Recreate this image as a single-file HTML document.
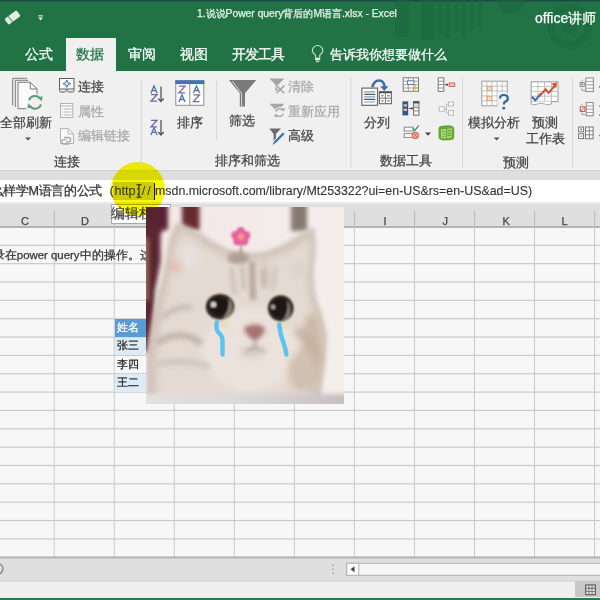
<!DOCTYPE html>
<html><head><meta charset="utf-8">
<style>
*{margin:0;padding:0;box-sizing:border-box}
html,body{width:600px;height:600px;overflow:hidden;background:#f7f7f7;font-family:"Liberation Sans",sans-serif}
.a{position:absolute;white-space:nowrap;line-height:1;-webkit-text-stroke:0.25px currentColor}
svg{position:absolute;left:0;top:0}
</style></head><body>

<div class="a" style="left:0;top:0;width:600px;height:70.5px;background:#217346"></div>

<div class="a" style="left:66px;top:37.5px;width:50px;height:34px;background:#f0f0f0"></div>
<div class="a" style="left:0;top:70.5px;width:600px;height:100.5px;background:#f0f0f0"></div>
<div class="a" style="left:0;top:170px;width:600px;height:1px;background:#d2d2d2"></div>
<div class="a" style="left:0;top:171px;width:600px;height:9px;background:#dedede"></div>
<div class="a" style="left:0;top:180px;width:600px;height:22px;background:#fff"></div>
<div class="a" style="left:0;top:202px;width:600px;height:2px;background:#ebebeb"></div>
<div class="a" style="left:0;top:204px;width:600px;height:22px;background:#dfdfdf"></div>
<div class="a" style="left:0;top:226px;width:600px;height:1.5px;background:#b4b4b4"></div>
<div class="a" style="left:0;top:557px;width:600px;height:24px;background:#dfdfdf"></div>
<div class="a" style="left:0;top:581px;width:600px;height:16px;background:#efefef"></div>
<div class="a" style="left:0;top:597px;width:600px;height:1px;background:#e6efe9"></div><div class="a" style="left:0;top:598px;width:600px;height:2px;background:#2a7a4e"></div>
<svg width="600" height="72" viewBox="0 0 600 72">
<rect x="0" y="0" width="600" height="1.5" fill="#1c4a46"/>
<g fill="#1d673f" opacity="0.55">
<rect x="395" y="0" width="14" height="37"/>
<rect x="421" y="0" width="14" height="40"/>
<rect x="438" y="0" width="4" height="36"/>
<rect x="445" y="0" width="5" height="38"/>
<rect x="455" y="0" width="3" height="32"/>
<rect x="461" y="0" width="5" height="36"/>
<rect x="470" y="0" width="4" height="30"/>
<rect x="478" y="0" width="4" height="28"/>
<circle cx="511" cy="0" r="14"/>
</g>
<g fill="none" stroke="#1d673f" opacity="0.6">
<circle cx="569.7" cy="26" r="19" stroke-width="7"/>
</g>
<circle cx="569.7" cy="26" r="8" fill="#1d673f" opacity="0.6"/>
<!-- eraser -->
<g transform="translate(12.5 17.5) rotate(-37)">
<rect x="-7.5" y="-3.6" width="15" height="7.2" rx="1.3" fill="#dcefe2"/>
<rect x="-3.2" y="-3.6" width="0.9" height="7.2" fill="#4a7a5a"/>
</g>
<!-- qat dropdown -->
<rect x="38.3" y="15.3" width="4.6" height="1.1" fill="#e0f0e4"/>
<path d="M38.3 17.6H42.9L40.6 20.4Z" fill="#e0f0e4"/>
<!-- lightbulb -->
<path d="M315.5 57.5V55.2Q312.3 52.8 312.3 50.8A5.3 5.3 0 0 1 322.9 50.8Q322.9 52.8 319.7 55.2V57.5" fill="none" stroke="#c9e6d2" stroke-width="1.1"/>
<rect x="315" y="57.6" width="5.2" height="2.6" fill="#d9efe0"/>
<rect x="316" y="60.6" width="3.2" height="1.6" fill="#b9dcc4"/>
</svg>
<svg width="600" height="600" viewBox="0 0 600 600">
<rect x="0" y="244.70" width="600" height="1.2" fill="#cbcbcb"/>
<rect x="0" y="263.05" width="600" height="1.2" fill="#cbcbcb"/>
<rect x="0" y="281.40" width="600" height="1.2" fill="#cbcbcb"/>
<rect x="0" y="299.75" width="600" height="1.2" fill="#cbcbcb"/>
<rect x="0" y="318.10" width="600" height="1.2" fill="#cbcbcb"/>
<rect x="0" y="336.45" width="600" height="1.2" fill="#cbcbcb"/>
<rect x="0" y="354.80" width="600" height="1.2" fill="#cbcbcb"/>
<rect x="0" y="373.15" width="600" height="1.2" fill="#cbcbcb"/>
<rect x="0" y="391.50" width="600" height="1.2" fill="#cbcbcb"/>
<rect x="0" y="409.85" width="600" height="1.2" fill="#cbcbcb"/>
<rect x="0" y="428.20" width="600" height="1.2" fill="#cbcbcb"/>
<rect x="0" y="446.55" width="600" height="1.2" fill="#cbcbcb"/>
<rect x="0" y="464.90" width="600" height="1.2" fill="#cbcbcb"/>
<rect x="0" y="483.25" width="600" height="1.2" fill="#cbcbcb"/>
<rect x="0" y="501.60" width="600" height="1.2" fill="#cbcbcb"/>
<rect x="0" y="519.95" width="600" height="1.2" fill="#cbcbcb"/>
<rect x="0" y="538.30" width="600" height="1.2" fill="#cbcbcb"/>
<rect x="0" y="556.65" width="600" height="1.2" fill="#cbcbcb"/>
<rect x="53.70" y="227" width="1" height="330" fill="#cacaca"/>
<rect x="53.70" y="211" width="1.2" height="15.5" fill="#bdbdbd"/>
<rect x="113.74" y="227" width="1" height="330" fill="#cacaca"/>
<rect x="113.74" y="211" width="1.2" height="15.5" fill="#bdbdbd"/>
<rect x="173.78" y="227" width="1" height="330" fill="#cacaca"/>
<rect x="173.78" y="211" width="1.2" height="15.5" fill="#bdbdbd"/>
<rect x="233.82" y="227" width="1" height="330" fill="#cacaca"/>
<rect x="233.82" y="211" width="1.2" height="15.5" fill="#bdbdbd"/>
<rect x="293.86" y="227" width="1" height="330" fill="#cacaca"/>
<rect x="293.86" y="211" width="1.2" height="15.5" fill="#bdbdbd"/>
<rect x="353.90" y="227" width="1" height="330" fill="#cacaca"/>
<rect x="353.90" y="211" width="1.2" height="15.5" fill="#bdbdbd"/>
<rect x="413.94" y="227" width="1" height="330" fill="#cacaca"/>
<rect x="413.94" y="211" width="1.2" height="15.5" fill="#bdbdbd"/>
<rect x="473.98" y="227" width="1" height="330" fill="#cacaca"/>
<rect x="473.98" y="211" width="1.2" height="15.5" fill="#bdbdbd"/>
<rect x="534.02" y="227" width="1" height="330" fill="#cacaca"/>
<rect x="534.02" y="211" width="1.2" height="15.5" fill="#bdbdbd"/>
<rect x="594.06" y="227" width="1" height="330" fill="#cacaca"/>
<rect x="594.06" y="211" width="1.2" height="15.5" fill="#bdbdbd"/>
<rect x="0" y="556.5" width="600" height="2" fill="#b4b4b4"/><rect x="0" y="580.5" width="600" height="1" fill="#cfcfcf"/>
</svg>
<div class="a" style="left:197px;top:9px;font-size:10.3px;color:#e8f2ec;">1.说说Power query背后的M语言.xlsx - Excel</div>
<div class="a" style="left:535px;top:11px;font-size:14px;color:#ffffff;">office讲师</div>
<div class="a" style="left:25px;top:48px;font-size:13.5px;color:#ffffff;">公式</div>
<div class="a" style="left:76px;top:48px;font-size:13.5px;color:#217346;">数据</div>
<div class="a" style="left:128px;top:48px;font-size:13.5px;color:#ffffff;">审阅</div>
<div class="a" style="left:180px;top:48px;font-size:13.5px;color:#ffffff;">视图</div>
<div class="a" style="left:232px;top:48px;font-size:13.5px;color:#ffffff;letter-spacing:-0.9px">开发工具</div>
<div class="a" style="left:330px;top:48px;font-size:13.1px;color:#ffffff;">告诉我你想要做什么</div>
<div class="a" style="left:0px;top:116px;font-size:13px;color:#444;">全部刷新</div>
<div class="a" style="left:78px;top:80px;font-size:13.3px;color:#444;">连接</div>
<div class="a" style="left:78px;top:105px;font-size:13.3px;color:#a8a8a8;">属性</div>
<div class="a" style="left:78px;top:129px;font-size:13.3px;color:#a8a8a8;">编辑链接</div>
<div class="a" style="left:54px;top:155px;font-size:13.3px;color:#444;">连接</div>
<div class="a" style="left:177px;top:116px;font-size:13.3px;color:#444;">排序</div>
<div class="a" style="left:229px;top:114px;font-size:13.3px;color:#444;">筛选</div>
<div class="a" style="left:288px;top:80px;font-size:13.3px;color:#a8a8a8;">清除</div>
<div class="a" style="left:288px;top:105px;font-size:13.3px;color:#a8a8a8;">重新应用</div>
<div class="a" style="left:288px;top:129px;font-size:13.3px;color:#444;">高级</div>
<div class="a" style="left:215px;top:154px;font-size:13.3px;color:#444;">排序和筛选</div>
<div class="a" style="left:364px;top:116px;font-size:13.3px;color:#444;">分列</div>
<div class="a" style="left:380px;top:154px;font-size:13.3px;color:#444;">数据工具</div>
<div class="a" style="left:468px;top:116px;font-size:13.3px;color:#444;">模拟分析</div>
<div class="a" style="left:532px;top:116px;font-size:13.3px;color:#444;">预测</div>
<div class="a" style="left:526px;top:132px;font-size:13.3px;color:#444;">工作表</div>
<div class="a" style="left:503px;top:156px;font-size:13.3px;color:#444;">预测</div>
<svg width="600" height="600"><path d="M493.6 137.5H499.6L496.6 140.5Z" fill="#555"/></svg>
<div class="a" style="left:598.5px;top:80px;font-size:13.3px;color:#444;">创建组</div>
<div class="a" style="left:598.5px;top:105px;font-size:13.3px;color:#444;">取消组合</div>
<div class="a" style="left:598.5px;top:129px;font-size:13.3px;color:#444;">分类汇总</div>
<div class="a" style="left:113px;top:182px;width:41px;height:18px;background:#d2d2d2;mix-blend-mode:multiply"></div>
<div class="a" style="left:-9.5px;top:185px;font-size:12.6px;color:#333;letter-spacing:-0.32px">么样学M语言的公式（</div>
<div class="a" style="left:114.5px;top:185px;font-size:12.66px;color:#333;-webkit-text-stroke:0">http</div>
<div class="a" style="left:136.5px;top:185px;font-size:12.66px;color:#333;">:</div>
<div class="a" style="left:141.8px;top:185px;font-size:12.66px;color:#333;-webkit-text-stroke:0">/</div>
<div class="a" style="left:147.3px;top:185px;font-size:12.66px;color:#333;-webkit-text-stroke:0">/</div>
<div class="a" style="left:155px;top:185px;font-size:12.4px;color:#333;-webkit-text-stroke:0.1px #333">msdn.microsoft.com/library/Mt253322?ui=en-US&amp;rs=en-US&amp;ad=US)</div>
<div class="a" style="left:153.8px;top:182.5px;width:1.4px;height:17.5px;background:#111"></div>
<svg width="600" height="600"><path d="M136.5 184.8H141.5M139 184.8V197.2M136.5 197.2H141.5" stroke="#222" stroke-width="1.1" fill="none"/></svg>
<div class="a" style="left:110.5px;top:204px;width:60px;height:20px;background:#fff;border:1px solid #a8a8a8"></div>
<div class="a" style="left:110.8px;top:206.8px;font-size:13.6px;color:#444;">编辑栏</div>
<div class="a" style="left:110.8px;top:162px;width:54px;height:54px;border-radius:50%;background:#f8f800;mix-blend-mode:multiply;filter:blur(0.5px)"></div>
<div class="a" style="left:21px;top:216px;font-size:11px;color:#444;">C</div>
<div class="a" style="left:81px;top:216px;font-size:11px;color:#444;">D</div>
<div class="a" style="left:383.5px;top:216px;font-size:11px;color:#444;">I</div>
<div class="a" style="left:442.5px;top:216px;font-size:11px;color:#444;">J</div>
<div class="a" style="left:502.5px;top:216px;font-size:11px;color:#444;">K</div>
<div class="a" style="left:561.5px;top:216px;font-size:11px;color:#444;">L</div>
<div class="a" style="left:115px;top:319px;width:32px;height:17.8px;background:#5b9bd5"></div>
<div class="a" style="left:115px;top:337.6px;width:32px;height:17.6px;background:#ddebf7"></div>
<div class="a" style="left:115px;top:374.3px;width:32px;height:17.6px;background:#ddebf7"></div>
<div class="a" style="left:116.5px;top:322px;font-size:11px;color:#ffffff;">姓名</div>
<div class="a" style="left:116.5px;top:340.3px;font-size:11px;color:#222;">张三</div>
<div class="a" style="left:116.5px;top:358.6px;font-size:11px;color:#222;">李四</div>
<div class="a" style="left:116.5px;top:377px;font-size:11px;color:#222;">王二</div>
<svg width="600" height="600"><circle cx="-2.2" cy="568.8" r="5.2" fill="none" stroke="#7a7a7a" stroke-width="1.2"/><rect x="346.8" y="563.3" width="260" height="12" fill="#f6f6f6" stroke="#b0b0b0" stroke-width="1"/><rect x="346.8" y="563.3" width="12" height="12" fill="#fff" stroke="#b0b0b0" stroke-width="1"/><path d="M350.5 569.3L354.5 566.3V572.3Z" fill="#444"/><circle cx="333" cy="565.2" r="0.7" fill="#888"/><circle cx="333" cy="569.2" r="0.7" fill="#888"/><circle cx="333" cy="573.2" r="0.7" fill="#888"/><rect x="575" y="581" width="25" height="16" fill="#c8c8c8"/><rect x="585" y="584.3" width="11" height="11" fill="#666"/><path d="M586.3 585.6h2.2v2.2h-2.2zM589.4 585.6h2.2v2.2h-2.2zM592.5 585.6h2.2v2.2h-2.2zM586.3 588.7h2.2v2.2h-2.2zM589.4 588.7h2.2v2.2h-2.2zM592.5 588.7h2.2v2.2h-2.2zM586.3 591.8h2.2v2.2h-2.2zM589.4 591.8h2.2v2.2h-2.2zM592.5 591.8h2.2v2.2h-2.2z" fill="#e8e8e8"/></svg>
<div class="a" style="left:-7.2px;top:249px;font-size:11.6px;color:#333;">录在<span style="font-size:11.4px">power query</span>中的操作。这</div>
<svg width="600" height="600" viewBox="0 0 600 600">
<!-- separators -->
<rect x="140.8" y="80" width="1" height="86" fill="#d6d6d6"/>
<rect x="216.2" y="81" width="1" height="59" fill="#d6d6d6"/>
<rect x="350.3" y="78" width="1" height="90" fill="#d6d6d6"/>
<rect x="462.1" y="78" width="1" height="90" fill="#d6d6d6"/>
<rect x="572.2" y="78" width="1" height="90" fill="#d6d6d6"/>

<!-- refresh all -->
<g fill="none" stroke="#7c7c7c" stroke-width="1">
<path d="M12.7 105.3V78.3H27"/>
<path d="M15.3 107V80.3H28.3"/>
</g>
<path d="M18 82.3H30.3L37 89V108.7H18Z" fill="#fbfbfb"/>
<path d="M26.3 108.7H18V82.3H30.3L37 89V94.5M30.3 82.3V89H37" fill="none" stroke="#7c7c7c" stroke-width="1"/>
<circle cx="35" cy="102.3" r="8.2" fill="#f0f0f0"/>
<g fill="none" stroke="#5c9c80" stroke-width="2.1">
<path d="M29.2 100.3A6.1 6.1 0 0 1 40.2 98.8"/>
<path d="M40.9 104.3A6.1 6.1 0 0 1 29.8 105.8"/>
</g>
<path d="M37.6 97.4L42.6 96.2L41.9 101.2Z" fill="#5c9c80"/>
<path d="M32.4 107.2L27.4 108.4L28.1 103.4Z" fill="#5c9c80"/>
<!-- dropdown under quanbu -->
<path d="M25 137.5H31L28 140.5Z" fill="#555"/>

<!-- connections icon -->
<rect x="59.5" y="78.5" width="14.5" height="10.5" fill="#fff" stroke="#5a5a5a" stroke-width="1"/>
<path d="M66.8 80Q67.3 83.2 70.5 83.7Q67.3 84.2 66.8 87.4Q66.3 84.2 63.1 83.7Q66.3 83.2 66.8 80Z" fill="#dce8f5" stroke="#3a6db0" stroke-width="1"/>
<path d="M59.5 89.5V90.5Q59.5 92 61 92H64.5Q66 92 66 90.5V89.5M67.5 89.5V90.5Q67.5 92 69 92H72.5Q74 92 74 90.5V89.5" fill="none" stroke="#5a5a5a" stroke-width="1"/>
<!-- properties icon -->
<rect x="60.5" y="103.5" width="12.3" height="14" fill="#fafafa" stroke="#b2b2b2" stroke-width="1"/>
<path d="M60.5 106H72.8M64 109H71.5M64 112H71.5M64 115H71.5M62 109H63M62 112H63M62 115H63" stroke="#b2b2b2" stroke-width="1"/>
<!-- edit links icon -->
<path d="M60.5 128.6H68.2L73.5 134V143.5H60.5Z" fill="#fafafa" stroke="#b2b2b2" stroke-width="1"/>
<path d="M68.2 128.6V134H73.5" fill="none" stroke="#b2b2b2" stroke-width="1"/>
<path d="M64 137.5H68.5A2.2 2.2 0 0 1 68.5 141.9H66M66.5 139.6H64A2.2 2.2 0 0 0 64 144H69" fill="none" stroke="#a9a9a9" stroke-width="1.3"/>

<!-- sort AZ -->
<g fill="none" stroke-width="1.3">
<path d="M150.9 93.2L154 86L157.1 93.2M152 90.7H156" stroke="#4a72aa"/>
<path d="M151 94.6H157L151 101.2H157" stroke="#7e62a2"/>
<path d="M151 120.3H157L151 126.8H157" stroke="#7e62a2"/>
<path d="M150.9 134.9L154 127.8L157.1 134.9M152 132.4H156" stroke="#4a72aa"/>
<path d="M161 86.5V101.3M158.3 98.5L161 101.5L163.7 98.5M161 120V134.8M158.3 132L161 135L163.7 132" stroke="#555"/>
</g>
<!-- sort dialog -->
<rect x="175.8" y="80.8" width="28" height="24.5" fill="#fff" stroke="#8a8a8a" stroke-width="1"/>
<rect x="175.3" y="80.3" width="29" height="3.8" fill="#4472b6"/>
<rect x="189.3" y="84" width="1" height="21" fill="#8a8a8a"/>
<g fill="none" stroke-width="1.3">
<path d="M179 86.2H185L179 92.8H185" stroke="#7e62a2"/>
<path d="M178.9 102L182 94.8L185.1 102M180 99.5H184" stroke="#4a72aa"/>
<path d="M193.4 93L196.5 86L199.6 93M194.5 90.5H198.5" stroke="#4a72aa"/>
<path d="M193.5 94.9H199.5L193.5 101.6H199.5" stroke="#7e62a2"/>
</g>

<!-- big filter -->
<path d="M229 80H256.3L245 93.2V106.4H239.8V93.2Z" fill="#7a7a7a"/>
<path d="M232.5 81.3L241.6 93.6V106" fill="none" stroke="#e8e8e8" stroke-width="0.9"/>
<!-- clear -->
<path d="M269.4 78.6H284.4L278.4 84.5V90.8H275.4V84.5Z" fill="#a4a4a4"/>
<path d="M276.4 85.6L284.3 93.3M284.3 85.6L276.4 93.3" stroke="#f0f0f0" stroke-width="3"/>
<path d="M276.4 85.6L284.3 93.3M284.3 85.6L276.4 93.3" stroke="#a4a4a4" stroke-width="1.5"/>
<!-- reapply -->
<path d="M269.4 103.8H284.4L278.4 109.7V116H275.4V109.7Z" fill="#a8a8a8"/>
<circle cx="279.6" cy="112.6" r="5.6" fill="#f0f0f0"/>
<g fill="none" stroke="#a8a8a8" stroke-width="1.5">
<path d="M275.8 111.6A4 4 0 0 1 283 110.6"/>
<path d="M283.4 113.6A4 4 0 0 1 276.2 114.6"/>
</g>
<path d="M281.6 108.6L284.8 108L284.2 111.6Z" fill="#a8a8a8"/>
<path d="M277.6 116.6L274.4 117.2L275 113.6Z" fill="#a8a8a8"/>
<!-- advanced -->
<path d="M269.4 128.6H281L276 134V142.4H273.6V134Z" fill="#6c6c6c"/>
<path d="M284 133L274 143.2" stroke="#f0f0f0" stroke-width="4"/>
<path d="M283.8 133.2L274.4 142.8" stroke="#3f6db4" stroke-width="2.3"/>
<path d="M274.6 142.6L273 144.3" stroke="#6a6a6a" stroke-width="1.2"/>

<!-- text to columns -->
<path d="M372.3 87.2Q374 80.5 379 80.5Q384 80.5 384.6 87" fill="none" stroke="#3a6db0" stroke-width="2.5"/>
<path d="M380.2 86.2H388.4L384.3 91Z" fill="#3a6db0"/>
<rect x="361.9" y="88.1" width="15.6" height="17.2" fill="#fff" stroke="#6a6a6a" stroke-width="1.2"/>
<path d="M364.2 91.8H375.2M364.2 96.9H375.2M364.2 102H375.2" stroke="#7c9cc4" stroke-width="1.2"/>
<path d="M364.2 94.4H375.2M364.2 99.4H375.2" stroke="#555" stroke-width="1.2"/>
<rect x="379.4" y="91.7" width="12" height="12" fill="#fff" stroke="#6a6a6a" stroke-width="1.1"/>
<rect x="379.2" y="91.5" width="12.4" height="1.8" fill="#555"/>
<path d="M385.4 93V103.7M379.4 98.2H391.4" stroke="#6a6a6a" stroke-width="0.9"/>
<path d="M381.2 95.8H383.6M387.2 95.8H389.6M381.2 100.9H383.6M387.2 100.9H389.6" stroke="#555" stroke-width="1"/>

<!-- flash fill -->
<rect x="403.2" y="77.8" width="15.3" height="13.5" fill="#fff" stroke="#7a7a7a" stroke-width="1"/>
<path d="M403.2 81.2H418.5M403.2 84.6H418.5M403.2 88H418.5M408.3 77.8V91.3M413.4 77.8V91.3" stroke="#8a8a8a" stroke-width="0.8"/>
<rect x="407.5" y="80.8" width="6.5" height="3.6" fill="#fff" stroke="#5a7aa8" stroke-width="1"/>
<path d="M416.8 83.5L412.6 88.3H415.3L413.2 92.6L418.2 86.8H415.5Z" fill="#f2b233"/>
<!-- remove duplicates -->
<rect x="402.4" y="101.4" width="5.8" height="14" fill="#34558a"/>
<rect x="403.6" y="104.3" width="3.4" height="2.2" fill="#e2c9a0"/>
<rect x="403.6" y="108.7" width="3.4" height="2.2" fill="#e2c9a0"/>
<path d="M409 108.4H412.6" stroke="#444" stroke-width="1"/>
<path d="M411.7 106.8L413.4 108.4L411.7 110Z" fill="#444"/>
<rect x="413.6" y="101.6" width="5.3" height="13.6" fill="#fff" stroke="#6a6a6a" stroke-width="1"/>
<rect x="413.3" y="101.3" width="5.9" height="2.2" fill="#34558a"/>
<rect x="414.3" y="104.5" width="3.9" height="2.3" fill="#e2c9a0"/>
<path d="M413.6 107.7H418.9M413.6 110.9H418.9" stroke="#6a6a6a" stroke-width="0.8"/>
<!-- data validation -->
<rect x="404.2" y="127.2" width="9" height="3.8" fill="#fff" stroke="#8a8a8a" stroke-width="1"/>
<rect x="404.2" y="133.6" width="9" height="3.8" fill="#fff" stroke="#8a8a8a" stroke-width="1"/>
<path d="M412.6 128.2L414.8 130.4L418.8 125.4" fill="none" stroke="#3d9a6a" stroke-width="1.4"/>
<circle cx="415.3" cy="135.4" r="3.4" fill="#f4a090" stroke="#d05a48" stroke-width="0.9"/>
<path d="M413.6 133.8L417 137" stroke="#d05a48" stroke-width="0.9"/>
<path d="M425 132.4H431L428 135.8Z" fill="#444"/>
<!-- consolidate -->
<rect x="438.2" y="77.8" width="5.6" height="13.6" fill="#fff" stroke="#7a7a7a" stroke-width="1"/>
<path d="M438.2 81.2H443.8M438.2 84.6H443.8M438.2 88H443.8" stroke="#7a7a7a" stroke-width="0.8"/>
<path d="M444.8 84.7H447.6" stroke="#444" stroke-width="1"/>
<path d="M446.8 83.2L448.6 84.7L446.8 86.2Z" fill="#444"/>
<rect x="449.2" y="82.9" width="5.6" height="3.6" fill="#f2c4b8" stroke="#c8604e" stroke-width="0.9"/>
<!-- relationships -->
<g fill="#fafafa" stroke="#b4b4b4" stroke-width="0.9">
<rect x="439.2" y="106.8" width="5" height="4.4"/>
<rect x="448.5" y="102" width="5" height="4"/>
<rect x="448.5" y="110.6" width="5" height="4.6"/>
</g>
<path d="M444.2 109H446.4V104H448.5M446.4 109V112.8H448.5" fill="none" stroke="#b4b4b4" stroke-width="0.9"/>
<!-- data model -->
<path d="M438.5 128.5Q438.5 126.3 441 125.9L448 125.2Q454.2 125.6 454.2 128.5V137Q454.2 139.6 451.5 139.9L444.5 140.6Q438.5 140.2 438.5 137.5Z" fill="#65a832"/>
<path d="M441 129.5L445.8 128.9V138.6L441 138Z" fill="#b5da8c"/>
<path d="M446.8 128.7L452 128.1V137.8L446.8 138.5Z" fill="#9fce6c"/>
<path d="M441.8 131.5H445M441.8 134H445M441.8 136.4H445M447.6 130.6H451.2M447.6 133H451.2M447.6 135.4H451.2" stroke="#5a9a2c" stroke-width="0.8"/>
<!-- what-if -->
<rect x="481.8" y="81.2" width="25.4" height="24.6" fill="#fff" stroke="#9a9a9a" stroke-width="1"/>
<path d="M481.8 86.1H507.2M481.8 91H507.2M481.8 95.9H507.2M481.8 100.8H507.2M486.9 81.2V105.8M492 81.2V105.8M497.1 81.2V105.8M502.2 81.2V105.8" stroke="#b8b8b8" stroke-width="0.9"/>
<rect x="487.4" y="86.6" width="4.1" height="4" fill="#fbe3c4" stroke="#e0a060" stroke-width="0.8"/>
<rect x="487.4" y="96.4" width="4.1" height="4" fill="#fbe3c4" stroke="#e0a060" stroke-width="0.8"/>
<rect x="497.6" y="93" width="12" height="17" fill="#f0f0f0"/>
<path d="M500 98.4Q500 95 503.9 95Q507.8 95 507.8 98.2Q507.8 100.6 505.5 101.6Q503.8 102.4 503.8 104.6" fill="none" stroke="#2f63aa" stroke-width="2.2"/>
<circle cx="503.8" cy="108.2" r="1.4" fill="#2f63aa"/>

<!-- forecast sheet -->
<rect x="531.2" y="81.8" width="26.8" height="19.8" fill="#fff" stroke="#9a9a9a" stroke-width="1"/>
<path d="M531.2 86.6H558M531.2 91.4H558M531.2 96.2H558M538 81.8V101.6M544.7 81.8V101.6M551.4 81.8V101.6" stroke="#b8b8b8" stroke-width="0.9"/>
<path d="M531.2 101.6V104Q534 105.6 537.5 104Q541 102.4 544.7 104Q548 105.6 551.4 104V101.6" fill="#fff" stroke="#9a9a9a" stroke-width="0.9"/>
<path d="M531.8 96.8L535.3 100.3L541 93.4" fill="none" stroke="#3a6db0" stroke-width="2"/>
<path d="M539 96.6L545.6 89.3L548.6 93L555.5 85" fill="none" stroke="#d9502f" stroke-width="2"/>
<path d="M551.5 83.6L557.2 82.4L556 88.2Z" fill="#d9502f"/>

<!-- right partial group -->
<rect x="585.8" y="78" width="7.5" height="13.6" fill="#fff" stroke="#7a7a7a" stroke-width="0.9"/>
<path d="M585.8 81.4H593.3M585.8 84.8H593.3M585.8 88.2H593.3" stroke="#8a8a8a" stroke-width="0.8"/>
<rect x="580.2" y="82.4" width="4" height="4" fill="#fff" stroke="#7a7a7a" stroke-width="0.9"/>
<path d="M581.2 84.4H583.2M582.2 83.4V85.4" stroke="#555" stroke-width="0.7"/>
<path d="M582 79.5V81M582 88V90.5H585" fill="none" stroke="#8a8a8a" stroke-width="0.8"/>
<rect x="586.2" y="102.6" width="7" height="13.2" fill="#fff" stroke="#7a7a7a" stroke-width="0.9"/>
<path d="M586.2 105.9H593.2M586.2 109.2H593.2M586.2 112.5H593.2" stroke="#8a8a8a" stroke-width="0.8"/>
<rect x="580.3" y="106.8" width="4.6" height="4.6" fill="#fff" stroke="#d04a3a" stroke-width="1"/>
<path d="M580.8 111L584.6 107.2" stroke="#d04a3a" stroke-width="0.9"/>
<path d="M582 103.5V105.5M582 112.5V114.6H585.4" fill="none" stroke="#8a8a8a" stroke-width="0.8"/>
<rect x="578.6" y="127" width="5" height="4.8" fill="#fff" stroke="#6a6a6a" stroke-width="0.9"/>
<rect x="578.6" y="133.8" width="5" height="4.8" fill="#fff" stroke="#6a6a6a" stroke-width="0.9"/>
<rect x="585.5" y="127" width="7.6" height="11.8" fill="#fff" stroke="#6a6a6a" stroke-width="0.9"/>
<path d="M585.5 130.9H593.1M585.5 134.8H593.1M589.3 127V138.8M580 129.4H582.2M580 136.2H582.2M581.1 128.3V130.5" stroke="#6a6a6a" stroke-width="0.8"/>
</svg>
<svg width="600" height="600" viewBox="0 0 600 600">
<defs>
<clipPath id="pc"><rect x="146" y="207" width="198" height="197"/></clipPath>
<filter id="b1" x="-20%" y="-20%" width="140%" height="140%"><feGaussianBlur stdDeviation="0.8"/></filter>
<filter id="b2" x="-20%" y="-20%" width="140%" height="140%"><feGaussianBlur stdDeviation="2"/></filter>
<filter id="b28" x="-30%" y="-30%" width="160%" height="160%"><feGaussianBlur stdDeviation="2.8"/></filter>
<filter id="b3" x="-30%" y="-30%" width="160%" height="160%"><feGaussianBlur stdDeviation="3.5"/></filter>
<radialGradient id="eyeg" cx="42%" cy="40%" r="60%">
<stop offset="0" stop-color="#161110"/><stop offset="0.55" stop-color="#231b19"/><stop offset="0.8" stop-color="#4a3e38"/><stop offset="1" stop-color="#8a7c70"/>
</radialGradient>
<radialGradient id="bgg" cx="30%" cy="10%" r="90%">
<stop offset="0" stop-color="#f3e9e8"/><stop offset="1" stop-color="#f3efed"/>
</radialGradient>
<linearGradient id="bandg" x1="0" x2="1" y1="0" y2="0"><stop offset="0" stop-color="#e4e0e0"/><stop offset="0.5" stop-color="#dcd8d8"/><stop offset="1" stop-color="#c4bebe"/></linearGradient>
</defs>
<g clip-path="url(#pc)">
<rect x="146" y="207" width="198" height="197" fill="url(#bgg)"/>
<g filter="url(#b2)">
<!-- pillars -->
<rect x="140" y="200" width="9" height="32" fill="#4a2a34"/>
<rect x="148.5" y="200" width="19.5" height="30" fill="#5a2430"/>
<path d="M148 225H167L160.5 234V262L155 290L152 352H140V225Z" fill="#5c2630"/>
<rect x="140" y="238" width="8.2" height="62" fill="#9a6a58"/>
<rect x="182" y="200" width="17.5" height="30" fill="#662a30"/>
<rect x="291" y="200" width="16" height="31" fill="#87796f"/>
</g>
<g filter="url(#b2)">
<!-- head silhouette (edge) -->
<path d="M146 404V352Q152 320 158 292Q165 272 167 250Q170 232 177 222Q190 226 202 234Q216 244 230 250Q250 254 262 252Q278 248 291 240Q302 232 314 227Q317 245 315 258Q312 275 316 298Q324 318 327 336Q325 365 320 404Z" fill="#d2c4ba"/>
</g>
<g filter="url(#b3)">
<path d="M156 404V352Q160 322 165 296Q171 275 173 254Q176 240 180 232Q192 236 202 244Q218 254 232 258Q250 262 262 260Q278 256 292 250Q302 242 309 238Q311 250 309 262Q306 278 310 300Q318 320 320 338Q318 365 313 404Z" fill="#e4dad2"/>
<ellipse cx="250" cy="350" rx="48" ry="42" fill="#ebe2dc"/>
<ellipse cx="190" cy="258" rx="9" ry="12" fill="#e7e0dc"/>
</g>
<g filter="url(#b3)">
<!-- ear inner -->
<ellipse cx="175" cy="267" rx="6" ry="5" fill="#dfb8ae"/>
<ellipse cx="298" cy="270" rx="6" ry="8" fill="#ddd0ca"/>
<!-- cheek shading -->
<ellipse cx="312" cy="350" rx="10" ry="38" fill="#cbb8a6"/>
<path d="M296 330Q312 340 320 360" stroke="#c4b09e" stroke-width="7" fill="none"/>
<ellipse cx="302" cy="372" rx="14" ry="20" fill="#d2c0b0"/>
<ellipse cx="252" cy="352" rx="12" ry="5" fill="#d8cac2"/>
<path d="M292 365Q305 378 315 395" stroke="#cbbfb4" stroke-width="6" fill="none"/>
<path d="M262 262L270 285" stroke="#d0c6be" stroke-width="6" fill="none"/>
</g>
<g filter="url(#b28)">
<path d="M162 318Q176 305 192 307" stroke="#c6bab2" stroke-width="5" fill="none"/>
<path d="M157 343Q172 333 186 336Q196 338 201 344" stroke="#c0b2a8" stroke-width="6" fill="none"/>
<path d="M156 364Q185 358 210 367" stroke="#d0c6be" stroke-width="6" fill="none"/>
</g>
<g filter="url(#b2)">
<!-- forehead stripes -->
<ellipse cx="238" cy="258" rx="11" ry="6" fill="#ae9e94"/>
<path d="M252 262L253 300" stroke="#b3a394" stroke-width="5.5"/>
<path d="M263.5 270L264 288" stroke="#c2b2a6" stroke-width="4.5"/>
<path d="M231 268L235 294" stroke="#cdc0b6" stroke-width="4.5"/>
<path d="M242 266L244 290" stroke="#c6b8ae" stroke-width="3.5"/>
<path d="M276 266L272 290" stroke="#d0c4ba" stroke-width="4"/>
<ellipse cx="222" cy="324" rx="10" ry="3" fill="#e6d9bc"/>
<ellipse cx="282" cy="326" rx="9" ry="3" fill="#e6dcc4"/>
<!-- bottom band -->
<rect x="140" y="394" width="210" height="16" fill="url(#bandg)"/>
</g>
<!-- eyes -->
<g filter="url(#b1)">
<ellipse cx="220" cy="306.8" rx="14.2" ry="12.8" fill="#2e2522"/>
<ellipse cx="219.5" cy="306.5" rx="10" ry="9.5" fill="#1a1413"/>
<path d="M228.5 298Q235.5 306 230 315.5Q227 318.5 222.5 318.6Q230.5 310 228.5 298Z" fill="#8e7e6e"/>
<rect x="210.8" y="302" width="5.3" height="5.3" rx="2" fill="#ded6ce"/>
<ellipse cx="280.7" cy="308.3" rx="12.8" ry="13" fill="#2e2522"/>
<ellipse cx="280" cy="308" rx="9" ry="9.6" fill="#1a1413"/>
<path d="M287 300Q293 308 289 317.5Q286.5 320.5 282.5 320.8Q289.5 311 287 300Z" fill="#85766a"/>
<rect x="271.3" y="304.7" width="3.6" height="4.6" rx="1.6" fill="#b8aea6"/>
</g>
<g filter="url(#b2)">
<!-- nose -->
<ellipse cx="254.5" cy="331" rx="13" ry="9" fill="#e4d6d2"/>
<path d="M243.8 329Q245.5 324.5 254.5 324.5Q263.5 324.5 265.2 329Q263.5 336.5 255 341Q246.5 336.5 243.8 329Z" fill="#a87270"/>
<path d="M246 352Q251 347.5 255 348.5Q259 347.5 265 352M255 341V348" stroke="#9a8880" stroke-width="1.6" fill="none"/>
</g>
<!-- tears -->
<g fill="none" stroke="#5bc2f2" stroke-width="4.4" stroke-linecap="round">
<path d="M216.8 322.5Q215.5 330 219 333Q222.8 336 222.5 342V354.5"/>
<path d="M279.2 324.5Q280 333 282.5 340Q285.5 348 286.4 354.5"/>
</g>
<!-- flower -->
<g filter="url(#b1)">
<circle cx="240.8" cy="231.3" r="4.2" fill="#e8629c"/>
<circle cx="246.2" cy="235.2" r="4.2" fill="#e8629c"/>
<circle cx="244.2" cy="241.2" r="4.2" fill="#e8629c"/>
<circle cx="237.4" cy="241.2" r="4.2" fill="#e8629c"/>
<circle cx="235.4" cy="235.2" r="4.2" fill="#e8629c"/>
<circle cx="241" cy="236.8" r="3" fill="#f2a088"/>
<path d="M241 243V253" stroke="#8a6f6a" stroke-width="1.2"/>
</g>
</g>
</svg>
</body></html>
